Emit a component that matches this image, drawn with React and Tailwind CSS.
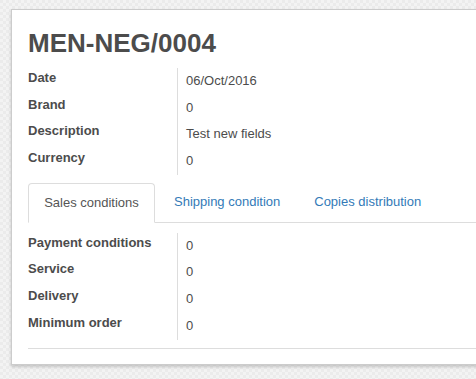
import React from "react";

const head = [
  ["Date", "06/Oct/2016"],
  ["Brand", "0"],
  ["Description", "Test new fields"],
  ["Currency", "0"],
];

const sales = [
  ["Payment conditions", "0"],
  ["Service", "0"],
  ["Delivery", "0"],
  ["Minimum order", "0"],
];

const FieldGroup = ({ rows }) => (
  <div className="flex">
    <div className="w-[150px] border-r border-[#dddddd] flex flex-col">
      {rows.map(([label]) => (
        <div key={label} className="h-[26.7px] font-bold text-[13px] leading-[18px] pt-[1px]">
          {label}
        </div>
      ))}
    </div>
    <div className="flex flex-col pl-[8px]">
      {rows.map(([label, value]) => (
        <div key={label} className="h-[26.7px] text-[13px] leading-[18px] pt-[4px]">
          {value}
        </div>
      ))}
    </div>
  </div>
);

export default function App() {
  return (
    <div
      className="w-[476px] h-[379px] overflow-hidden bg-[repeating-conic-gradient(#f3f3f3_0%_25%,#ebebeb_0%_50%)] bg-[length:6px_6px] pt-[9px] pl-[11px]"
      style={{ fontFamily: '"Liberation Sans", Arial, sans-serif' }}
    >
      <div className="w-[500px] h-[356px] bg-white border border-[#cccccc] shadow-[0_2px_3px_rgba(0,0,0,0.18)] pl-[16px] pt-[18px] text-[#4c4c4c]">
        <h1 className="text-[26px] font-bold leading-[30px] text-[#4c4c4c] mb-[10px]">MEN-NEG/0004</h1>
        <FieldGroup rows={head} />

        <div className="mt-[8px] flex items-end border-b border-[#dddddd] h-[40px]">
          <div className="-mb-px h-[40px] w-[127px] bg-white border border-[#dddddd] border-b-white rounded-t-[4px] flex items-center justify-center text-[13px] text-[#555555]">
            Sales conditions
          </div>
          <div className="h-[40px] flex items-center pl-[19px] text-[13px] text-[#337ab7]">Shipping condition</div>
          <div className="h-[40px] flex items-center pl-[34px] text-[13px] text-[#337ab7]">Copies distribution</div>
        </div>

        <div className="mt-[10px]">
          <FieldGroup rows={sales} />
        </div>

        <div className="mt-[8px] border-t border-[#dddddd]"></div>
      </div>
    </div>
  );
}
